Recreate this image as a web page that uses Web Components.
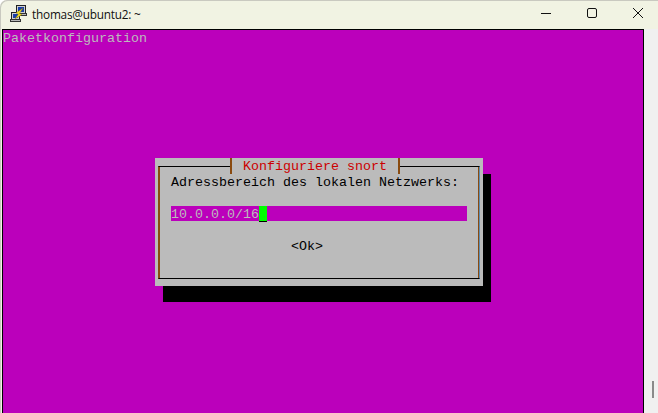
<!DOCTYPE html>
<html>
<head>
<meta charset="utf-8">
<style>
  html, body { margin: 0; padding: 0; background: #fff; }
  body { width: 658px; height: 413px; overflow: hidden; }
</style>
</head>
<body>
<putty-window title="thomas@ubuntu2: ~">
  <term-dialog title="Konfiguriere snort" prompt="Adressbereich des lokalen Netzwerks:" value="10.0.0.0/16"></term-dialog>
</putty-window>

<script>
// Window frame: title bar, terminal area, scrollbar
class PuttyWindow extends HTMLElement {
  connectedCallback() {
    const root = this.attachShadow({ mode: 'open' });
    root.innerHTML = `
      <style>
        :host {
          display: flex;
          flex-direction: column;
          width: 658px;
          height: 413px;
          background: #f1f3e3;
          border-top-left-radius: 7px;
          box-shadow: inset 1px 1px 0 #c9c9c0;
          overflow: hidden;
        }
        .bar {
          display: flex;
          align-items: flex-start;
          height: 29px;
          flex: none;
          font: 11.8px/28px "Open Sans", "Noto Sans", sans-serif;
          letter-spacing: -0.22px;
          color: #111;
        }
        .icon { width: 18px; height: 18px; margin: 5px 4px 0 10px; flex: none; }
        .name { flex: 1; white-space: nowrap; }
        .btn { width: 40px; padding-top: 7px; display: flex; justify-content: center; flex: none; margin-left: 5px; }
        .btn svg { width: 12px; height: 12px; display: block; }
        .main { flex: 1; display: flex; min-height: 0; padding-left: 2px; }
        .term {
          width: 642px;
          box-sizing: border-box;
          border: solid #000;
          border-width: 1px 1px 0 1px;
          background: #bb00bb;
          color: #bbbbbb;
          font: 13.33px/16px "Liberation Mono", monospace;
          display: flex;
          flex-direction: column;
        }
        .pkg { padding-top: 1px; height: 16px; box-sizing: border-box; white-space: pre; }
        .slot { padding: 112px 0 0 152px; }
        .scroll { flex: 1; background: #f0f0f0; position: relative; }
        .thumb { position: absolute; right: 4px; top: 352px; width: 2px; height: 17px; background: #8a8a8a; }
      </style>
      <div class="bar">
        <svg class="icon" viewBox="0 0 18 18">
          <rect x="6.5" y="0.5" width="9" height="8" fill="#cfcfcf" stroke="#222"/>
          <rect x="8" y="2" width="6" height="5" fill="#1c3fa8"/>
          <rect x="6.5" y="8.5" width="10" height="2" fill="#b8b8b8" stroke="#333"/>
          <rect x="1.5" y="7.5" width="8" height="7" fill="#cfcfcf" stroke="#222"/>
          <rect x="3" y="9" width="5" height="4" fill="#1c3fa8"/>
          <rect x="0.5" y="14.5" width="10" height="2" fill="#b8b8b8" stroke="#333"/>
          <path d="M13 3 L6 8 L8.5 9 L5 14 L12 9.5 L9.5 8.5 Z" fill="#f5e020" stroke="#8a7a00" stroke-width=".4"/>
        </svg>
        <span class="name">${this.getAttribute('title')}</span>
        <span class="btn"><svg viewBox="0 0 12 12"><path d="M1 6.5h10" stroke="#111" fill="none"/></svg></span>
        <span class="btn" style="margin-left:6px"><svg viewBox="0 0 12 12"><rect x="1.5" y="1.5" width="9" height="9" rx="1.5" stroke="#111" fill="none"/></svg></span>
        <span class="btn" style="margin-left:6px"><svg viewBox="0 0 12 12"><path d="M1 1l10 10M11 1L1 11" stroke="#111" fill="none"/></svg></span>
      </div>
      <div class="main">
        <div class="term">
          <div class="pkg">Paketkonfiguration</div>
          <div class="slot"><slot></slot></div>
        </div>
        <div class="scroll"><div class="thumb"></div></div>
      </div>`;
  }
}

// ncurses style dialog box with input line and Ok button
class TermDialog extends HTMLElement {
  connectedCallback() {
    const root = this.attachShadow({ mode: 'open' });
    root.innerHTML = `
      <style>
        :host {
          display: block;
          width: 328px;
          height: 128px;
          box-sizing: border-box;
          padding: 8px 3px 7px 3px;
          background: #bbbbbb;
          box-shadow: 8px 16px 0 #000;
          color: #000;
          font: 13.33px/18px "Liberation Mono", monospace;
        }
        .frame {
          position: relative;
          height: 100%;
          box-sizing: border-box;
          border: 1px solid #000;
          border-left: 1px solid #8a4b10;
          border-right: 1px solid #5d8db5;
          box-shadow: inset 1px 0 0 #8a4b10, inset -1px 0 0 #8a4b10;
          padding: 7px 0 0 12px;
        }
        .legend {
          position: absolute;
          left: 71px;
          top: -9px;
          width: 170px;
          height: 16px;
          box-sizing: border-box;
          background: #bbbbbb;
          border: solid #8a4b10;
          border-width: 0 2px;
          padding-left: 11px;
          color: #cc0000;
          white-space: pre;
        }
        .prompt { height: 16px; white-space: pre; }
        .input {
          display: flex;
          width: 296px;
          height: 15px;
          margin-top: 16px;
          background: #bb00bb;
          color: #bbbbbb;
          white-space: pre;
        }
        .cursor { width: 8px; height: 15px; background: #00ff00; box-shadow: 0 1px 0 #000; }
        .ok { height: 16px; margin: 17px 0 0 120px; white-space: pre; }
      </style>
      <div class="frame">
        <div class="legend">${this.getAttribute('title')}</div>
        <div class="prompt">${this.getAttribute('prompt')}</div>
        <div class="input"><span>${this.getAttribute('value')}</span><span class="cursor"></span></div>
        <div class="ok">&lt;Ok&gt;</div>
      </div>`;
  }
}

customElements.define('putty-window', PuttyWindow);
customElements.define('term-dialog', TermDialog);
</script>
</body>
</html>
